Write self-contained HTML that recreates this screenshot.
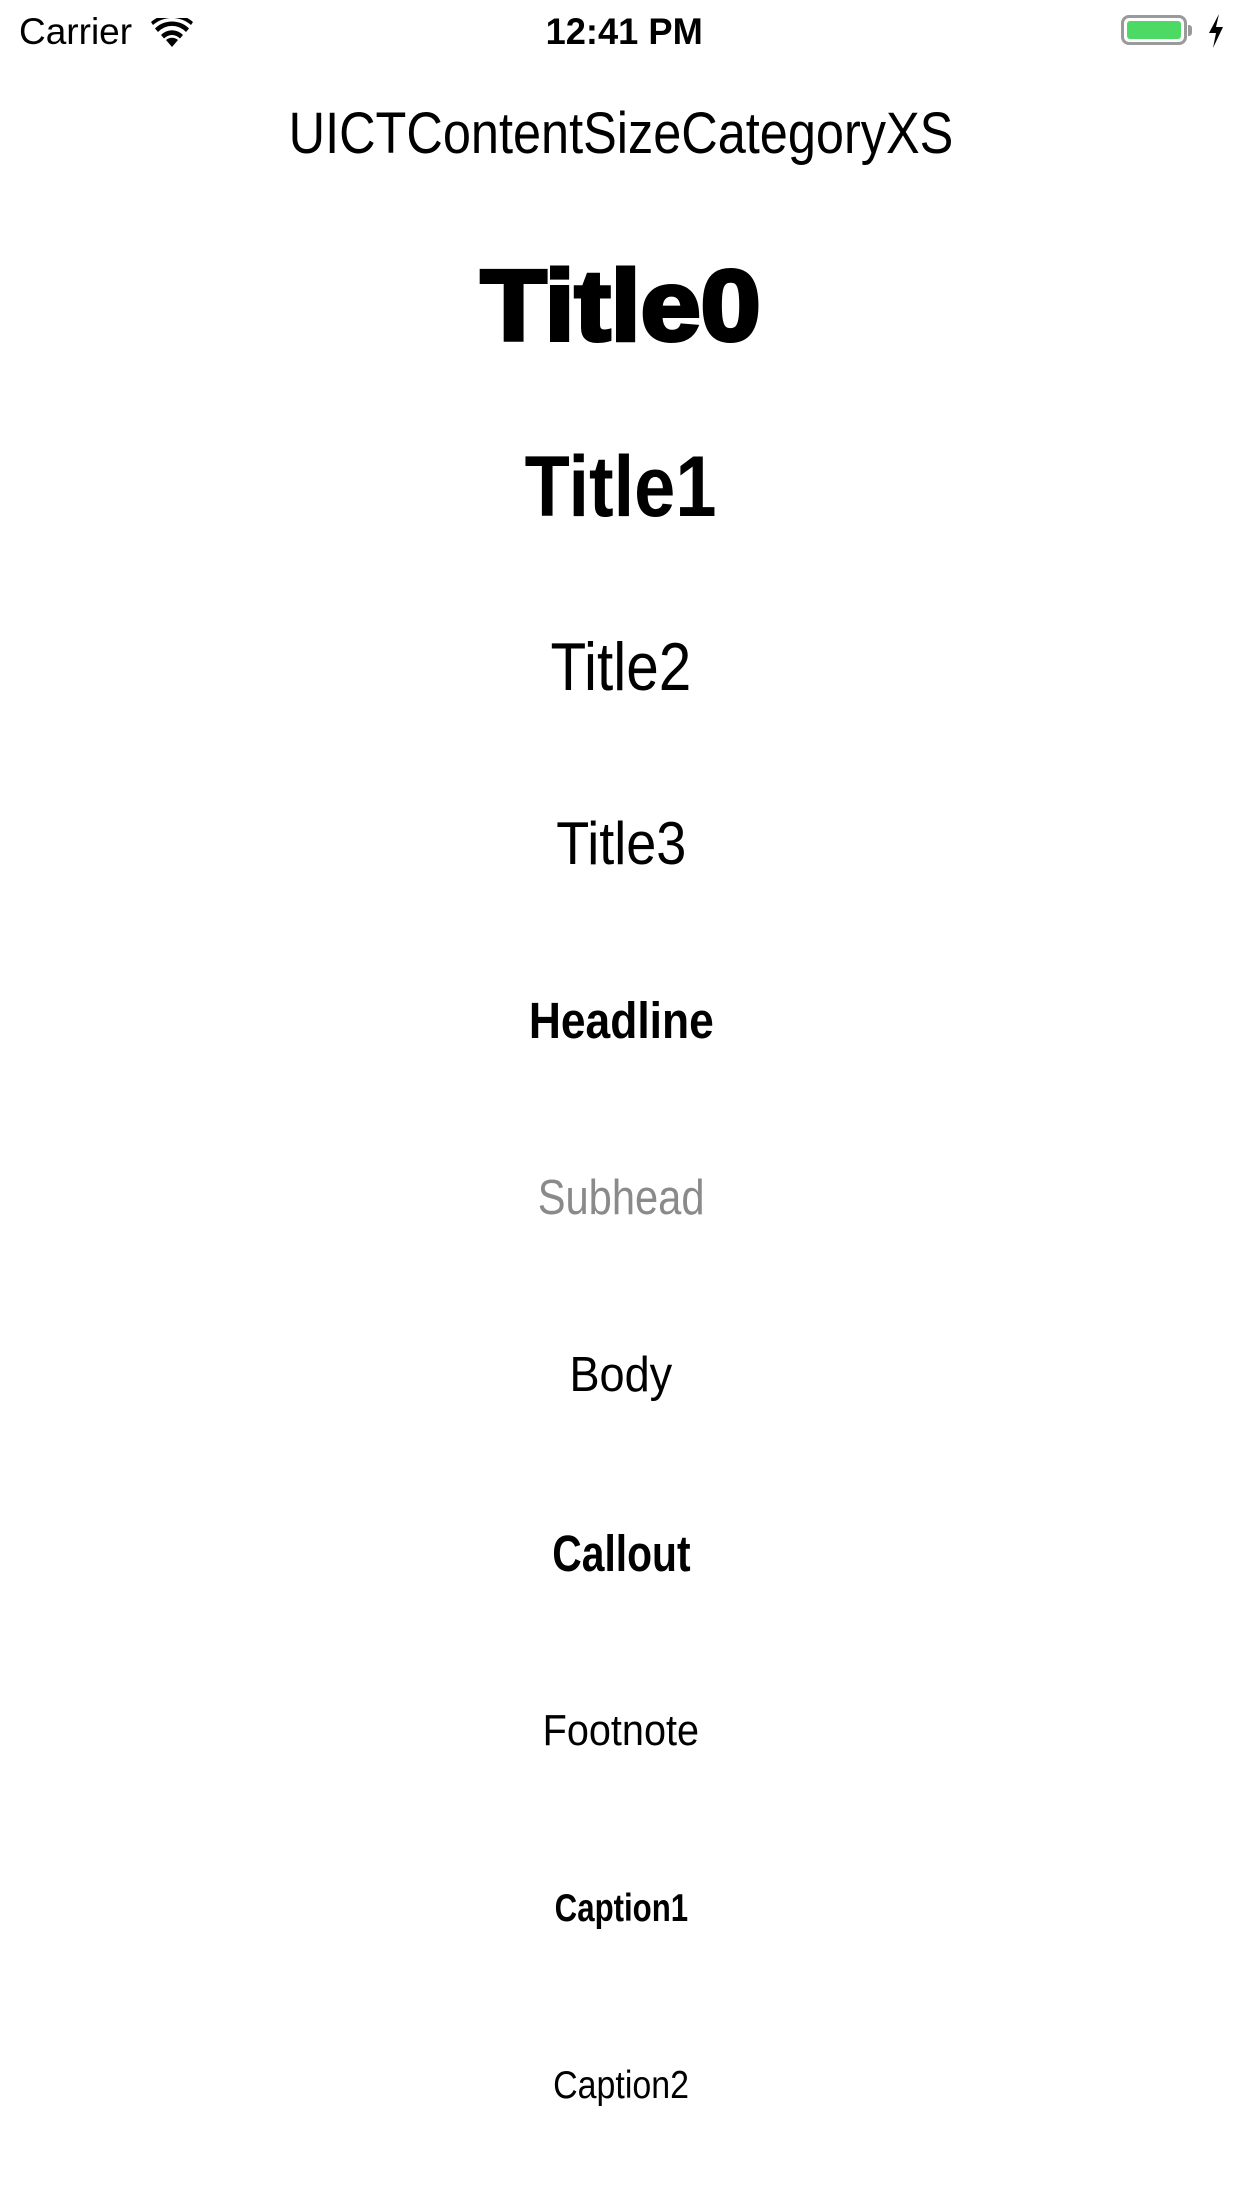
<!DOCTYPE html>
<html><head><meta charset="utf-8"><style>
html,body{margin:0;padding:0;background:#fff;}
body{width:1242px;height:2208px;position:relative;overflow:hidden;font-family:"Liberation Sans",sans-serif;color:#000;}
.t{position:absolute;left:0;right:0;text-align:center;line-height:1;white-space:nowrap;}
.t span{display:inline-block;transform-origin:center;}
</style></head><body>
<!-- status bar -->
<div style="position:absolute;left:19px;top:13px;font-size:37px;line-height:1;">Carrier</div>
<svg style="position:absolute;left:151px;top:18px" width="42" height="30" viewBox="0 0 42 30">
<path d="M21 29 L27 22 A9 9 0 0 0 15 22 Z" fill="#000"/>
<path d="M10 17 A15 15 0 0 1 32 17 L29 20.5 A11 11 0 0 0 13 20.5 Z" fill="#000"/>
<path d="M4 10.5 A24 24 0 0 1 38 10.5 L35 14 A19 19 0 0 0 7 14 Z" fill="#000"/>
<path d="M0 4 A32 32 0 0 1 42 4 L40 7 A29 29 0 0 0 2 7 Z" fill="#000"/>
</svg>
<div class="t" style="top:13px;font-size:37px;font-weight:bold;left:6px;"><span style="transform:scaleX(0.98)">12:41 PM</span></div>
<div style="position:absolute;left:1121px;top:15px;width:66px;height:30px;border:3px solid #9a9a9a;border-radius:8px;box-sizing:border-box;padding:3px;">
<div style="width:100%;height:100%;background:#4cd964;border-radius:3px;"></div></div>
<div style="position:absolute;left:1188px;top:25px;width:4px;height:11px;background:#9a9a9a;border-radius:0 3px 3px 0;"></div>
<svg style="position:absolute;left:1206px;top:14px" width="20" height="34" viewBox="0 0 20 34"><path d="M13 0 L3 19 L10 19 L7 34 L17 13 L10 13 Z" fill="#000"/></svg>

<div class="t" style="top:105px;font-size:58px;"><span style="transform:scaleX(0.87)">UICTContentSizeCategoryXS</span></div>
<div class="t" style="top:256px;font-size:100px;font-weight:bold;"><span style="transform:scaleX(1.08);-webkit-text-stroke:4px #000">Title0</span></div>
<div class="t" style="top:444px;font-size:86px;font-weight:bold;"><span style="transform:scaleX(0.86)">Title1</span></div>
<div class="t" style="top:633px;font-size:68px;"><span style="transform:scaleX(0.86)">Title2</span></div>
<div class="t" style="top:814px;font-size:60px;"><span style="transform:scaleX(0.9)">Title3</span></div>
<div class="t" style="top:995px;font-size:51px;font-weight:bold;"><span style="transform:scaleX(0.87)">Headline</span></div>
<div class="t" style="top:1174px;font-size:49px;color:#8a8a8a;"><span style="transform:scaleX(0.85)">Subhead</span></div>
<div class="t" style="top:1351px;font-size:49px;"><span style="transform:scaleX(0.92)">Body</span></div>
<div class="t" style="top:1528px;font-size:51px;font-weight:bold;"><span style="transform:scaleX(0.8)">Callout</span></div>
<div class="t" style="top:1709px;font-size:44px;"><span style="transform:scaleX(0.9)">Footnote</span></div>
<div class="t" style="top:1889px;font-size:39px;font-weight:bold;"><span style="transform:scaleX(0.8)">Caption1</span></div>
<div class="t" style="top:2066px;font-size:39px;"><span style="transform:scaleX(0.87)">Caption2</span></div>
</body></html>
